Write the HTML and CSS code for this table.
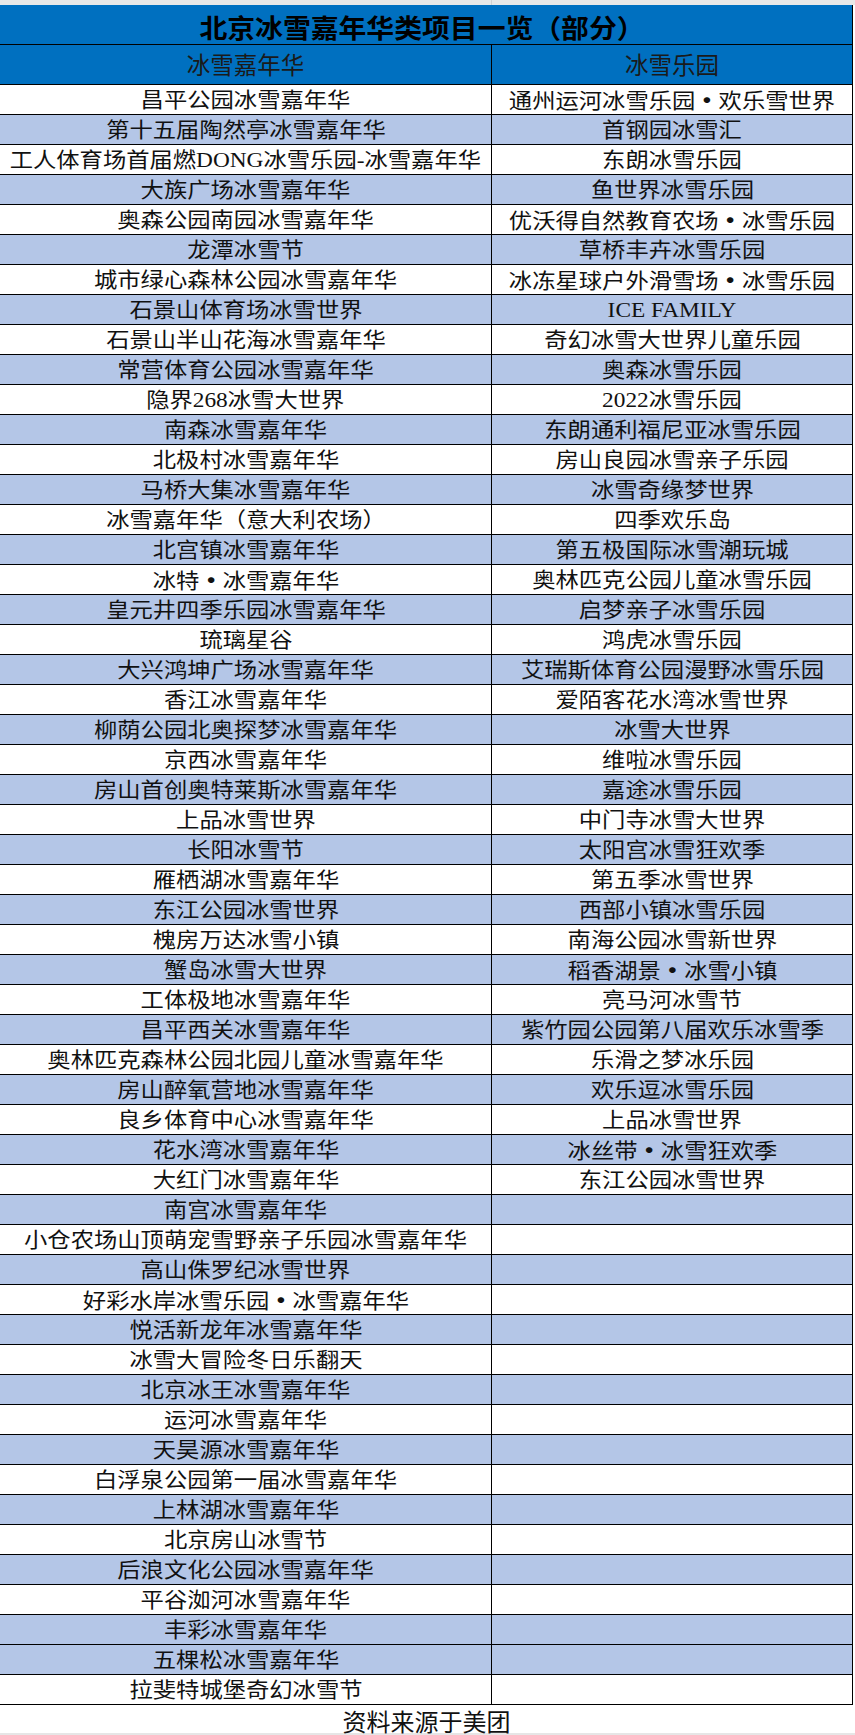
FILE: index.html
```html
<!DOCTYPE html>
<html lang="zh-CN">
<head>
<meta charset="utf-8">
<title>北京冰雪嘉年华类项目一览（部分）</title>
<link rel="stylesheet" href="styles.css">
</head>
<body>
<div class="page">
  <div class="topstrip"><div class="topstrip-a"></div></div>
  <div class="table">
    <div class="title"><span class="tt">北京冰雪嘉年华类项目一览（部分）</span></div>
    <div class="head">
      <div class="cell l"><span class="ht">冰雪嘉年华</span></div>
      <div class="cell r"><span class="ht">冰雪乐园</span></div>
    </div>
    <div class="row"><div class="cell l"><span class="t">昌平公园冰雪嘉年华</span></div><div class="cell r"><span class="t">通州运河冰雪乐园<span class="dot">·</span>欢乐雪世界</span></div></div>
    <div class="row alt"><div class="cell l"><span class="t">第十五届陶然亭冰雪嘉年华</span></div><div class="cell r"><span class="t">首钢园冰雪汇</span></div></div>
    <div class="row"><div class="cell l"><span class="t">工人体育场首届燃DONG冰雪乐园-冰雪嘉年华</span></div><div class="cell r"><span class="t">东朗冰雪乐园</span></div></div>
    <div class="row alt"><div class="cell l"><span class="t">大族广场冰雪嘉年华</span></div><div class="cell r"><span class="t">鱼世界冰雪乐园</span></div></div>
    <div class="row"><div class="cell l"><span class="t">奥森公园南园冰雪嘉年华</span></div><div class="cell r"><span class="t">优沃得自然教育农场<span class="dot">·</span>冰雪乐园</span></div></div>
    <div class="row alt"><div class="cell l"><span class="t">龙潭冰雪节</span></div><div class="cell r"><span class="t">草桥丰卉冰雪乐园</span></div></div>
    <div class="row"><div class="cell l"><span class="t">城市绿心森林公园冰雪嘉年华</span></div><div class="cell r"><span class="t">冰冻星球户外滑雪场<span class="dot">·</span>冰雪乐园</span></div></div>
    <div class="row alt"><div class="cell l"><span class="t">石景山体育场冰雪世界</span></div><div class="cell r"><span class="t">ICE FAMILY</span></div></div>
    <div class="row"><div class="cell l"><span class="t">石景山半山花海冰雪嘉年华</span></div><div class="cell r"><span class="t">奇幻冰雪大世界儿童乐园</span></div></div>
    <div class="row alt"><div class="cell l"><span class="t">常营体育公园冰雪嘉年华</span></div><div class="cell r"><span class="t">奥森冰雪乐园</span></div></div>
    <div class="row"><div class="cell l"><span class="t">隐界268冰雪大世界</span></div><div class="cell r"><span class="t">2022冰雪乐园</span></div></div>
    <div class="row alt"><div class="cell l"><span class="t">南森冰雪嘉年华</span></div><div class="cell r"><span class="t">东朗通利福尼亚冰雪乐园</span></div></div>
    <div class="row"><div class="cell l"><span class="t">北极村冰雪嘉年华</span></div><div class="cell r"><span class="t">房山良园冰雪亲子乐园</span></div></div>
    <div class="row alt"><div class="cell l"><span class="t">马桥大集冰雪嘉年华</span></div><div class="cell r"><span class="t">冰雪奇缘梦世界</span></div></div>
    <div class="row"><div class="cell l"><span class="t">冰雪嘉年华（意大利农场）</span></div><div class="cell r"><span class="t">四季欢乐岛</span></div></div>
    <div class="row alt"><div class="cell l"><span class="t">北宫镇冰雪嘉年华</span></div><div class="cell r"><span class="t">第五极国际冰雪潮玩城</span></div></div>
    <div class="row"><div class="cell l"><span class="t">冰特<span class="dot">·</span>冰雪嘉年华</span></div><div class="cell r"><span class="t">奥林匹克公园儿童冰雪乐园</span></div></div>
    <div class="row alt"><div class="cell l"><span class="t">皇元井四季乐园冰雪嘉年华</span></div><div class="cell r"><span class="t">启梦亲子冰雪乐园</span></div></div>
    <div class="row"><div class="cell l"><span class="t">琉璃星谷</span></div><div class="cell r"><span class="t">鸿虎冰雪乐园</span></div></div>
    <div class="row alt"><div class="cell l"><span class="t">大兴鸿坤广场冰雪嘉年华</span></div><div class="cell r"><span class="t">艾瑞斯体育公园漫野冰雪乐园</span></div></div>
    <div class="row"><div class="cell l"><span class="t">香江冰雪嘉年华</span></div><div class="cell r"><span class="t">爱陌客花水湾冰雪世界</span></div></div>
    <div class="row alt"><div class="cell l"><span class="t">柳荫公园北奥探梦冰雪嘉年华</span></div><div class="cell r"><span class="t">冰雪大世界</span></div></div>
    <div class="row"><div class="cell l"><span class="t">京西冰雪嘉年华</span></div><div class="cell r"><span class="t">维啦冰雪乐园</span></div></div>
    <div class="row alt"><div class="cell l"><span class="t">房山首创奥特莱斯冰雪嘉年华</span></div><div class="cell r"><span class="t">嘉途冰雪乐园</span></div></div>
    <div class="row"><div class="cell l"><span class="t">上品冰雪世界</span></div><div class="cell r"><span class="t">中门寺冰雪大世界</span></div></div>
    <div class="row alt"><div class="cell l"><span class="t">长阳冰雪节</span></div><div class="cell r"><span class="t">太阳宫冰雪狂欢季</span></div></div>
    <div class="row"><div class="cell l"><span class="t">雁栖湖冰雪嘉年华</span></div><div class="cell r"><span class="t">第五季冰雪世界</span></div></div>
    <div class="row alt"><div class="cell l"><span class="t">东江公园冰雪世界</span></div><div class="cell r"><span class="t">西部小镇冰雪乐园</span></div></div>
    <div class="row"><div class="cell l"><span class="t">槐房万达冰雪小镇</span></div><div class="cell r"><span class="t">南海公园冰雪新世界</span></div></div>
    <div class="row alt"><div class="cell l"><span class="t">蟹岛冰雪大世界</span></div><div class="cell r"><span class="t">稻香湖景<span class="dot">·</span>冰雪小镇</span></div></div>
    <div class="row"><div class="cell l"><span class="t">工体极地冰雪嘉年华</span></div><div class="cell r"><span class="t">亮马河冰雪节</span></div></div>
    <div class="row alt"><div class="cell l"><span class="t">昌平西关冰雪嘉年华</span></div><div class="cell r"><span class="t">紫竹园公园第八届欢乐冰雪季</span></div></div>
    <div class="row"><div class="cell l"><span class="t">奥林匹克森林公园北园儿童冰雪嘉年华</span></div><div class="cell r"><span class="t">乐滑之梦冰乐园</span></div></div>
    <div class="row alt"><div class="cell l"><span class="t">房山醉氧营地冰雪嘉年华</span></div><div class="cell r"><span class="t">欢乐逗冰雪乐园</span></div></div>
    <div class="row"><div class="cell l"><span class="t">良乡体育中心冰雪嘉年华</span></div><div class="cell r"><span class="t">上品冰雪世界</span></div></div>
    <div class="row alt"><div class="cell l"><span class="t">花水湾冰雪嘉年华</span></div><div class="cell r"><span class="t">冰丝带<span class="dot">·</span>冰雪狂欢季</span></div></div>
    <div class="row"><div class="cell l"><span class="t">大红门冰雪嘉年华</span></div><div class="cell r"><span class="t">东江公园冰雪世界</span></div></div>
    <div class="row alt"><div class="cell l"><span class="t">南宫冰雪嘉年华</span></div><div class="cell r"></div></div>
    <div class="row"><div class="cell l"><span class="t">小仓农场山顶萌宠雪野亲子乐园冰雪嘉年华</span></div><div class="cell r"></div></div>
    <div class="row alt"><div class="cell l"><span class="t">高山侏罗纪冰雪世界</span></div><div class="cell r"></div></div>
    <div class="row"><div class="cell l"><span class="t">好彩水岸冰雪乐园<span class="dot">·</span>冰雪嘉年华</span></div><div class="cell r"></div></div>
    <div class="row alt"><div class="cell l"><span class="t">悦活新龙年冰雪嘉年华</span></div><div class="cell r"></div></div>
    <div class="row"><div class="cell l"><span class="t">冰雪大冒险冬日乐翻天</span></div><div class="cell r"></div></div>
    <div class="row alt"><div class="cell l"><span class="t">北京冰王冰雪嘉年华</span></div><div class="cell r"></div></div>
    <div class="row"><div class="cell l"><span class="t">运河冰雪嘉年华</span></div><div class="cell r"></div></div>
    <div class="row alt"><div class="cell l"><span class="t">天昊源冰雪嘉年华</span></div><div class="cell r"></div></div>
    <div class="row"><div class="cell l"><span class="t">白浮泉公园第一届冰雪嘉年华</span></div><div class="cell r"></div></div>
    <div class="row alt"><div class="cell l"><span class="t">上林湖冰雪嘉年华</span></div><div class="cell r"></div></div>
    <div class="row"><div class="cell l"><span class="t">北京房山冰雪节</span></div><div class="cell r"></div></div>
    <div class="row alt"><div class="cell l"><span class="t">后浪文化公园冰雪嘉年华</span></div><div class="cell r"></div></div>
    <div class="row"><div class="cell l"><span class="t">平谷洳河冰雪嘉年华</span></div><div class="cell r"></div></div>
    <div class="row alt"><div class="cell l"><span class="t">丰彩冰雪嘉年华</span></div><div class="cell r"></div></div>
    <div class="row alt2"><div class="cell l"><span class="t">五棵松冰雪嘉年华</span></div><div class="cell r"></div></div>
    <div class="row"><div class="cell l"><span class="t">拉斐特城堡奇幻冰雪节</span></div><div class="cell r"></div></div>
  </div>
  <div class="foot"><span class="ft">资料来源于美团</span></div>
  <div class="bottomstrip"></div>
</div>
</body>
</html>
```
FILE: styles.css
```css
html, body {
  margin: 0;
  padding: 0;
  background: #ffffff;
}

body {
  font-family: "Liberation Serif", "Noto Sans CJK SC", sans-serif;
  color: #111111;
}

.page {
  width: 855px;
  height: 1735px;
  overflow: hidden;
}

.topstrip {
  height: 5px;
  background: #e8e8e8;
  display: flex;
}

.topstrip-a {
  width: 491px;
  border-right: 1px solid #d2d2d2;
}

.table {
  width: 853px;
  border-right: 1px solid #000;
  box-sizing: border-box;
}

.title {
  height: 40px;
  box-sizing: border-box;
  background: #0070c0;
  border-bottom: 1px solid #000;
  display: flex;
  align-items: center;
  justify-content: center;
  padding-top: 4px;
}

.tt {
  display: inline-block;
  font-family: "Noto Sans CJK SC", sans-serif;
  font-weight: 700;
  font-size: 26px;
  line-height: 1;
  color: #000;
  white-space: nowrap;
  transform: scaleX(1.07);
  margin-left: -8px;
}

.head,
.row {
  display: grid;
  grid-template-columns: 492px 360px;
  box-sizing: border-box;
  border-bottom: 1px solid #000;
}

.head {
  height: 40px;
  background: #0070c0;
}

.row {
  height: 30px;
  background: #ffffff;
}

.row.alt,
.row.alt2 {
  background: #b4c6e7;
}

.cell {
  display: flex;
  align-items: center;
  justify-content: center;
  overflow: visible;
  min-width: 0;
}

.cell.l {
  border-right: 1px solid #000;
}

.ht {
  display: inline-block;
  font-family: "Noto Sans CJK SC", sans-serif;
  font-size: 23.5px;
  line-height: 1;
  color: #1a1a1a;
  white-space: nowrap;
}

.t {
  display: inline-block;
  font-size: 21px;
  line-height: 1;
  white-space: nowrap;
  transform: scaleX(1.11);
  padding-top: 2px;
}

.dot {
  display: inline-block;
  width: 1em;
  text-align: center;
  font-family: "Noto Sans CJK SC", sans-serif;
  font-weight: 900;
}

.foot {
  width: 853px;
  height: 28px;
  display: flex;
  align-items: center;
  justify-content: center;
}

.ft {
  display: inline-block;
  font-family: "Noto Sans CJK SC", sans-serif;
  font-size: 24px;
  line-height: 1;
  white-space: nowrap;
  padding-top: 3px;
}

.bottomstrip {
  height: 2px;
  background: #e6e6e6;
}
```
